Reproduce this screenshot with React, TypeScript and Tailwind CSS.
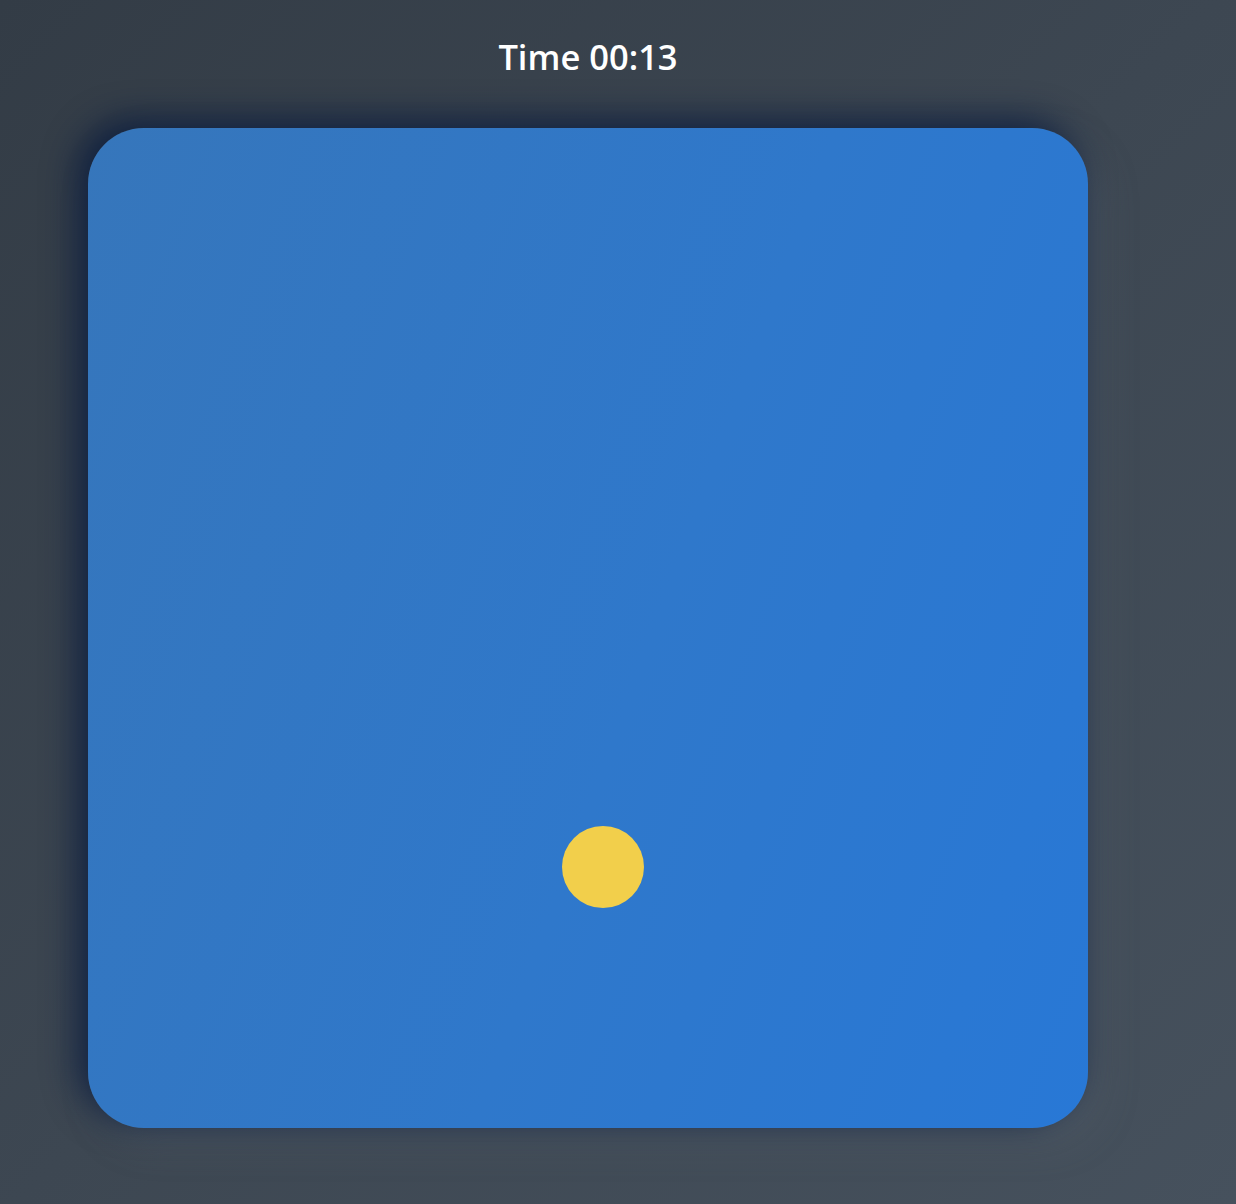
export default function App() {
  return (
    <div className="min-h-[1204px] w-full bg-[linear-gradient(135deg,#333c46_0%,#3d4752_50%,#46515d_100%)] font-['Open_Sans',sans-serif]">
      <div className="w-[1176px] pt-[34px] flex flex-col items-center">
        <h1 className="text-[34.5px] leading-[45px] font-semibold text-white">Time 00:13</h1>
        <div className="mt-[49px] relative w-[1000px] h-[1000px] rounded-[56px] bg-[linear-gradient(110deg,#3676bb_0%,#2f78cb_55%,#2878d6_100%)] shadow-[-10px_-8px_34px_rgba(10,28,62,0.9),12px_14px_36px_rgba(95,106,118,0.35)]">
          <div className="absolute left-[474px] top-[698px] w-[82px] h-[82px] rounded-full bg-[#f2cf4b]" />
        </div>
      </div>
    </div>
  );
}
